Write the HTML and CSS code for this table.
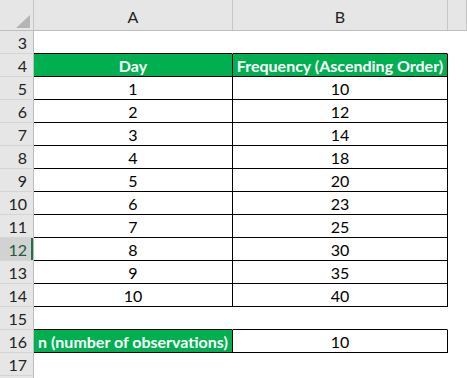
FILE: index.html
```html
<!DOCTYPE html>
<html>
<head>
<meta charset="utf-8">
<link rel="stylesheet" href="styles.css">
</head>
<body>
<div class="sheet">
  <div class="hd corner"><span class="tri"></span></div>
  <div class="hd col">A</div>
  <div class="hd col">B</div>
  <div class="hd col"></div>

  <div class="rh">3</div><div class="c topline"></div><div class="c topline"></div><div class="c"></div>
  <div class="rh">4</div><div class="c t th">Day</div><div class="c t th">Frequency (Ascending Order)</div><div class="c"></div>
  <div class="rh">5</div><div class="c t">1</div><div class="c t">10</div><div class="c"></div>
  <div class="rh">6</div><div class="c t">2</div><div class="c t">12</div><div class="c"></div>
  <div class="rh">7</div><div class="c t">3</div><div class="c t">14</div><div class="c"></div>
  <div class="rh">8</div><div class="c t">4</div><div class="c t">18</div><div class="c"></div>
  <div class="rh">9</div><div class="c t">5</div><div class="c t">20</div><div class="c"></div>
  <div class="rh">10</div><div class="c t">6</div><div class="c t">23</div><div class="c"></div>
  <div class="rh">11</div><div class="c t">7</div><div class="c t">25</div><div class="c"></div>
  <div class="rh sel">12</div><div class="c t">8</div><div class="c t">30</div><div class="c"></div>
  <div class="rh">13</div><div class="c t">9</div><div class="c t">35</div><div class="c"></div>
  <div class="rh">14</div><div class="c t">10</div><div class="c t">40</div><div class="c"></div>
  <div class="rh">15</div><div class="c topline"></div><div class="c topline"></div><div class="c"></div>
  <div class="rh">16</div><div class="c t th">n (number of observations)</div><div class="c t">10</div><div class="c"></div>
  <div class="rh">17</div><div class="c"></div><div class="c"></div><div class="c"></div>
  <div class="rh"></div><div class="c"></div><div class="c"></div><div class="c"></div>
</div>
</body>
</html>
```

FILE: styles.css
```css
html, body {
  margin: 0;
  padding: 0;
  background: #ffffff;
}

.sheet {
  display: grid;
  grid-template-columns: 34px 199px 215px 19px;
  grid-template-rows: 31px repeat(16, 23px);
  width: 467px;
  height: 378px;
  overflow: hidden;
  font-family: Lato, "Open Sans", sans-serif;
  font-size: 16px;
  color: #000;
}

.sheet > div {
  box-sizing: border-box;
  border-right: 1px solid #ffffff;
  border-bottom: 1px solid #ffffff;
  overflow: hidden;
  white-space: nowrap;
}

.hd {
  background: #e6e6e6;
  border-right-color: #c6c6c6 !important;
  border-bottom-color: #bdbdbd !important;
  color: #222;
  display: flex;
  align-items: center;
  justify-content: center;
  padding-top: 2px;
}

.corner {
  position: relative;
}

.tri {
  position: absolute;
  right: 3px;
  bottom: 2px;
  width: 0;
  height: 0;
  border-left: 14px solid transparent;
  border-bottom: 13px solid #b5b5b5;
}

.rh {
  background: #e6e6e6;
  border-right-color: #bdbdbd !important;
  border-bottom-color: #d4d4d4 !important;
  color: #222;
  text-align: right;
  padding-right: 6px;
  line-height: 23px;
}

.rh.sel {
  background: #d2d2d2;
  color: #1e5b38;
  box-shadow: inset -2px 0 0 #217346;
}

.c {
  text-align: center;
  line-height: 23px;
}

.c.topline {
  border-bottom-color: #000 !important;
}

.c.t {
  border-right-color: #000 !important;
  border-bottom-color: #000 !important;
}

.c.th {
  background: #00b050;
  color: #ffffff;
  font-weight: bold;
}
```
